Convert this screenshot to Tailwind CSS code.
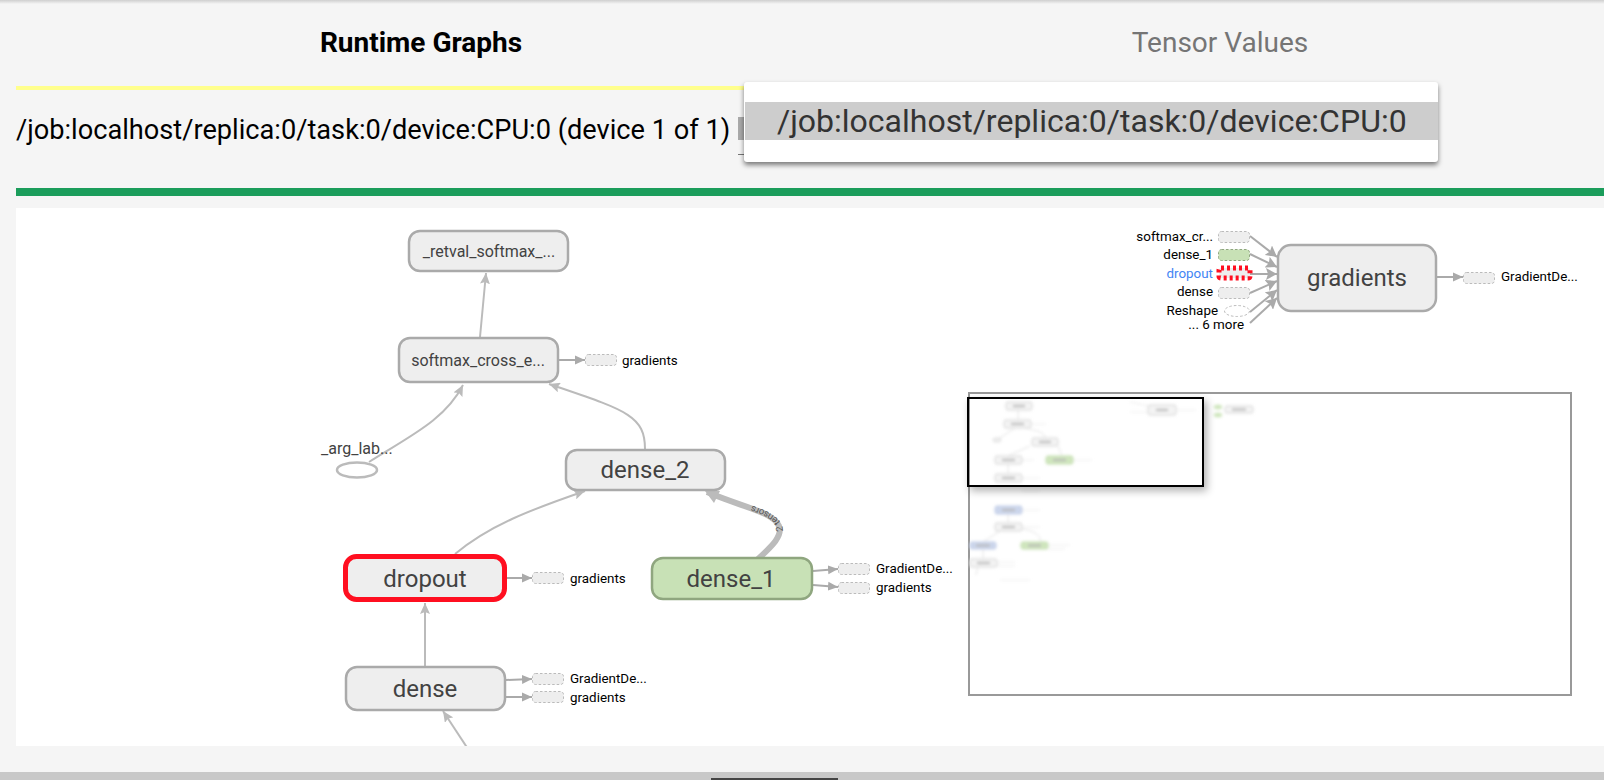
<!DOCTYPE html>
<html>
<head>
<meta charset="utf-8">
<script src="https://cdn.jsdelivr.net/npm/@tailwindcss/browser@4"></script>
</head>
<body class="bg-[#f5f5f5] font-['Roboto',sans-serif] overflow-hidden">
<div class="relative w-[1604px] h-[780px] flex flex-col overflow-hidden bg-[#f5f5f5]">
  <div class="h-1 bg-gradient-to-b from-[#cfcfcf] to-[#f5f5f5]"></div>
  <div class="ml-4 grid grid-cols-[810px_1fr] h-[86px]">
    <div class="flex items-center justify-center border-b-4 border-[#ffff8d] text-[28px] font-bold text-black pb-[4px] leading-none">Runtime Graphs</div>
    <div class="flex items-center justify-center text-[28px] text-[#757575] pb-[8px] pl-[10px] leading-none">Tensor Values</div>
  </div>
  <div class="ml-4 h-[98px] flex items-start pt-[20px]">
    <span class="text-[27.2px] leading-[40px] text-black whitespace-nowrap">/job:localhost/replica:0/task:0/device:CPU:0 (device 1 of 1)</span>
    <div class="ml-[8px] mt-[7px] w-[10px] h-[38px] border-b border-[#777]"><div class="h-[23px] bg-[#aaa]"></div></div>
  </div>
  <div class="ml-4 h-2 bg-[#1b9d5b]"></div>
  <div class="h-3 shrink-0"></div>
  <div class="ml-4 h-[538px] bg-white relative overflow-hidden">
    <svg width="1588" height="538" viewBox="16 208 1588 538" class="block font-['Roboto',sans-serif]">
      <defs>
        <marker id="a" markerUnits="userSpaceOnUse" markerWidth="12" markerHeight="10" refX="11" refY="5" orient="auto"><path d="M0 0L11 5L0 10L2 5Z" fill="#bbb"/></marker>
        <marker id="s" markerUnits="userSpaceOnUse" markerWidth="11" markerHeight="10" refX="10" refY="5" orient="auto"><path d="M0 0.5L10 5L0 9.5Z" fill="#aaa"/></marker>
        <marker id="t" markerUnits="userSpaceOnUse" markerWidth="12" markerHeight="12" refX="11" refY="6" orient="auto"><path d="M0 0L11 6L0 12L2 6Z" fill="#aaa"/></marker>
      </defs>

      <!-- edges -->
      <g fill="none" stroke="#bbb" stroke-width="2">
        <path d="M480 337L486 273" marker-end="url(#a)"/>
        <path d="M369 462C410 436 445 420 463 385" marker-end="url(#a)"/>
        <path d="M645 449C645 415 625 410 549 384" marker-end="url(#a)"/>
        <path d="M455 554C490 525 530 510 585 491" marker-end="url(#a)"/>
        <path d="M425 666L425 603" marker-end="url(#a)"/>
        <path d="M470 752L443 711" marker-end="url(#a)"/>
      </g>
      <path id="thick" d="M757 560C772 546 783 536 779 526C773 512 745 508 707 492" fill="none" stroke="#bbb" stroke-width="6"/>
      <path d="M705 491L720 491L714 503Z" fill="#bbb"/>
      <text font-size="9.5" fill="#555" dy="3"><textPath href="#thick" startOffset="37">2 tensors</textPath></text>

      <!-- stubs -->
      <g fill="none" stroke="#aaa" stroke-width="2">
        <path d="M559 360L585 360" marker-end="url(#s)"/>
        <path d="M507 578L532 578" marker-end="url(#s)"/>
        <path d="M506 680L532 679" marker-end="url(#s)"/>
        <path d="M506 697L532 697" marker-end="url(#s)"/>
        <path d="M813 571L838 569" marker-end="url(#s)"/>
        <path d="M813 585L838 587" marker-end="url(#s)"/>
        <path d="M1437 277L1463 277" marker-end="url(#s)"/>
        <path d="M1250 236L1277 257" marker-end="url(#t)"/>
        <path d="M1250 254L1277 267" marker-end="url(#t)"/>
        <path d="M1250 274L1277 274" marker-end="url(#t)"/>
        <path d="M1250 293L1277 281" marker-end="url(#t)"/>
        <path d="M1250 312L1277 290" marker-end="url(#t)"/>
        <path d="M1250 323L1277 298" marker-end="url(#t)"/>
      </g>

      <!-- main nodes -->
      <g stroke-width="2.5" fill="#eee" stroke="#aaa">
        <rect x="409" y="231" width="159" height="40" rx="11"/>
        <rect x="399" y="338" width="159" height="44" rx="11"/>
        <rect x="566" y="450" width="159" height="40" rx="11"/>
        <rect x="346" y="667" width="159" height="43" rx="11"/>
        <rect x="1278" y="245" width="158" height="66" rx="13"/>
        <rect x="652" y="558" width="160" height="41" rx="11" fill="#c8e1b6" stroke="#8fa67f"/>
        <rect x="345.5" y="556.5" width="159" height="43" rx="11" stroke="#ff0f20" stroke-width="5"/>
      </g>
      <ellipse cx="357" cy="470" rx="20" ry="7.5" fill="#fff" stroke="#bbb" stroke-width="2.5"/>

      <!-- dashed stubs -->
      <g fill="#eee" stroke="#bbb" stroke-width="1" stroke-dasharray="2.5 2">
        <rect x="585.5" y="354.5" width="31" height="11" rx="3"/>
        <rect x="532.5" y="572.5" width="31" height="11" rx="3"/>
        <rect x="532.5" y="673.5" width="31" height="11" rx="3"/>
        <rect x="532.5" y="691.5" width="31" height="11" rx="3"/>
        <rect x="838.5" y="563.5" width="31" height="11" rx="3"/>
        <rect x="838.5" y="582.5" width="31" height="11" rx="3"/>
        <rect x="1463.5" y="272.5" width="31" height="11" rx="3"/>
        <rect x="1218.5" y="231.5" width="31" height="11" rx="3"/>
        <rect x="1218.5" y="249.5" width="31" height="11" rx="3" fill="#c8e1b6" stroke="#8fa67f"/>
        <rect x="1218.5" y="287.5" width="31" height="11" rx="3"/>
        <ellipse cx="1237" cy="311" rx="12.5" ry="5.5" fill="#fff"/>
      </g>
      <rect x="1219" y="268" width="31" height="10" rx="2" fill="#eee" stroke="#ff0f20" stroke-width="5" stroke-dasharray="3 3"/>

      <!-- node labels -->
      <g fill="#424242" text-anchor="middle">
        <text x="489" y="257" font-size="16">_retval_softmax_...</text>
        <text x="478" y="366" font-size="16">softmax_cross_e...</text>
        <text x="645" y="478" font-size="24">dense_2</text>
        <text x="425" y="587" font-size="24">dropout</text>
        <text x="425" y="697" font-size="24">dense</text>
        <text x="731" y="587" font-size="24">dense_1</text>
        <text x="1357" y="286" font-size="24">gradients</text>
      </g>
      <text x="321" y="454" font-size="16" fill="#424242">_arg_lab...</text>

      <!-- stub labels -->
      <g fill="#000" font-size="13.4">
        <text x="622" y="365">gradients</text>
        <text x="570" y="583">gradients</text>
        <text x="570" y="683">GradientDe...</text>
        <text x="570" y="702">gradients</text>
        <text x="876" y="573">GradientDe...</text>
        <text x="876" y="592">gradients</text>
        <text x="1501" y="281">GradientDe...</text>
      </g>
      <g fill="#000" font-size="13.4" text-anchor="end">
        <text x="1213" y="241">softmax_cr...</text>
        <text x="1213" y="259">dense_1</text>
        <text x="1213" y="278" fill="#4285f4">dropout</text>
        <text x="1213" y="296">dense</text>
        <text x="1218" y="315">Reshape</text>
        <text x="1244" y="329">... 6 more</text>
      </g>

      <!-- minimap -->
      <rect x="969" y="393" width="602" height="302" fill="#fff" stroke="#999" stroke-width="2"/>
      <g class="blur-[1.4px]" fill="#f4f4f4" stroke="#d4d4d4" stroke-width="1">
        <rect x="1006" y="402" width="26" height="8" rx="2"/>
        <rect x="1004" y="420" width="27" height="8" rx="2"/>
        <rect x="1032" y="438" width="26" height="8" rx="2"/>
        <rect x="995" y="456" width="27" height="8" rx="2"/>
        <rect x="1046" y="456" width="27" height="8" rx="2" fill="#cfe6bd" stroke="#c2dcae"/>
        <rect x="995" y="474" width="27" height="8" rx="2"/>
        <rect x="1148" y="405" width="28" height="10" rx="2"/>
        <rect x="1225" y="406" width="28" height="7" rx="2"/>
        <rect x="995" y="506" width="27" height="8" rx="2" fill="#ccd6ec" stroke="#bfcbe6"/>
        <rect x="995" y="523" width="27" height="8" rx="2"/>
        <rect x="970" y="542" width="26" height="7" rx="2" fill="#ccd6ec" stroke="#bfcbe6"/>
        <rect x="1021" y="542" width="27" height="7" rx="2" fill="#cfe6bd" stroke="#c2dcae"/>
        <rect x="970" y="559" width="27" height="8" rx="2"/>
        <path d="M1018 410L1018 420M1015 428L1000 438M1045 438C1045 432 1035 430 1025 428M1030 446L1008 456M1058 446L1062 456M1008 464L1008 474M1008 514L1008 523M1000 531L983 542M1022 529C1032 530 1040 534 1041 542M983 549L983 559M978 567L976 575" fill="none" stroke="#e2e2e2"/>
        <path d="M1031 424L1046 424M1022 460L1034 460M1022 478L1040 478M1073 460L1092 460M1176 410L1196 410M1130 402L1148 406M1130 412L1148 412M1022 510L1040 510M1022 527L1040 527M1048 545L1070 545M1048 549L1065 549M997 562L1015 562M997 566L1015 566M1000 580L1030 580M1022 491L1040 491" fill="none" stroke="#ececec"/>
        <path d="M1013 406L1025 406M1011 424L1024 424M1039 442L1051 442M1002 460L1015 460M1053 460L1066 460M1002 478L1015 478M1156 410L1168 410M1232 409.5L1246 409.5M1002 510L1015 510M1002 527L1015 527M976 545.5L990 545.5M1028 545.5L1041 545.5M977 563L990 563" fill="none" stroke="#b8b8b8" stroke-width="2"/>
        <ellipse cx="997" cy="440" rx="4" ry="2"/>
        <ellipse cx="1218" cy="407" rx="4" ry="2" fill="#cfe6bd" stroke="#cfe6bd"/>
        <ellipse cx="1218" cy="415" rx="4" ry="2" fill="#cfe6bd" stroke="#cfe6bd"/>
      </g>
    </svg>
    <div class="absolute left-[951px] top-[189px] w-[237px] h-[90px] border-2 border-black shadow-[3px_4px_8px_rgba(0,0,0,0.3)]"></div>
  </div>
  <div class="h-[26px] shrink-0"></div>
  <div class="h-2 bg-[#c8c8c8] shrink-0 relative"><div class="absolute left-[711px] bottom-0 w-[127px] h-[2px] bg-[#444]"></div></div>

  <!-- dropdown menu over the page -->
  <div class="absolute left-[744px] top-[82px] w-[694px] h-[80px] bg-white rounded-[3px] shadow-[0_3px_5px_rgba(0,0,0,0.5)] py-5">
    <div class="h-[38px] ml-px bg-[#cdcdcd] pl-[32px] text-[32px] leading-[38px] text-[#333] whitespace-nowrap">/job:localhost/replica:0/task:0/device:CPU:0</div>
  </div>
</div>
</body>
</html>
